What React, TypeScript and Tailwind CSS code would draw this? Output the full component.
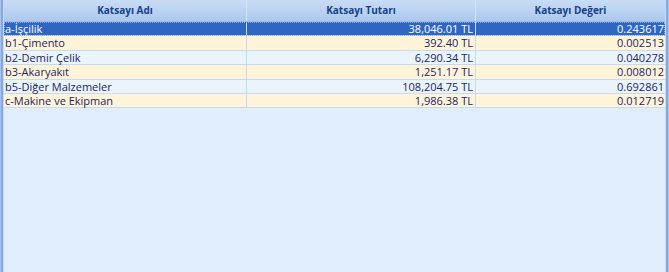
import React from 'react';

const rows = [
  { name: 'a-İşçilik', amount: '38,046.01 TL', value: '0.243617' },
  { name: 'b1-Çimento', amount: '392.40 TL', value: '0.002513' },
  { name: 'b2-Demir Çelik', amount: '6,290.34 TL', value: '0.040278' },
  { name: 'b3-Akaryakıt', amount: '1,251.17 TL', value: '0.008012' },
  { name: 'b5-Diğer Malzemeler', amount: '108,204.75 TL', value: '0.692861' },
  { name: 'c-Makine ve Ekipman', amount: '1,986.38 TL', value: '0.012719' },
];

export default function App() {
  return (
    <div
      className="w-[669px] h-[272px] flex bg-[#e0eefc] text-[11px] overflow-hidden"
      style={{ fontFamily: '"Open Sans", "Noto Sans", sans-serif' }}
    >
      {/* Left frame */}
      <div className="w-[1px] bg-[#a7c3ea]" />
      <div className="w-[2px] bg-[#86a9df]" />
      <div className="w-[1px] bg-[#c8daf3]" />

      <div className="flex-1 flex flex-col">
        {/* Header */}
        <div className="flex h-[22px] bg-gradient-to-b from-[#c9dcf4] to-[#acc8ee] border-b border-[#9ebbe4] font-bold text-[#15428b] text-[10px]">
          <div className="w-[243px] flex items-center justify-center border-r border-[#d6e4f6]">Katsayı Adı</div>
          <div className="w-[229px] flex items-center justify-center border-r border-[#d6e4f6]">Katsayı Tutarı</div>
          <div className="flex-1 flex items-center justify-center">Katsayı Değeri</div>
        </div>

        {/* Rows */}
        {rows.map((r, i) => {
          const selected = i === 0;
          const bg = selected
            ? 'bg-[#2f66c4] text-white outline outline-1 outline-dotted outline-[#8fb0e6] -outline-offset-1'
            : i % 2 === 1
              ? 'bg-[#fff4d9] text-[#1c2466]'
              : 'bg-[#eaf4fb] text-[#1c2466]';
          return (
            <div key={r.name} className={`flex h-[14.4px] leading-[14px] border-b border-[#c6daf2] ${bg}`}>
              <div className="w-[243px] pl-[1px] border-r border-[#c6daf2] whitespace-nowrap">{r.name}</div>
              <div className="w-[229px] pr-[2px] text-right border-r border-[#c6daf2] whitespace-nowrap">{r.amount}</div>
              <div className="flex-1 pr-[1px] text-right whitespace-nowrap">{r.value}</div>
            </div>
          );
        })}
      </div>

      {/* Right frame */}
      <div className="w-[1px] bg-[#c8daf3]" />
      <div className="w-[2px] bg-[#86a9df]" />
      <div className="w-[1px] bg-[#a7c3ea]" />
    </div>
  );
}
